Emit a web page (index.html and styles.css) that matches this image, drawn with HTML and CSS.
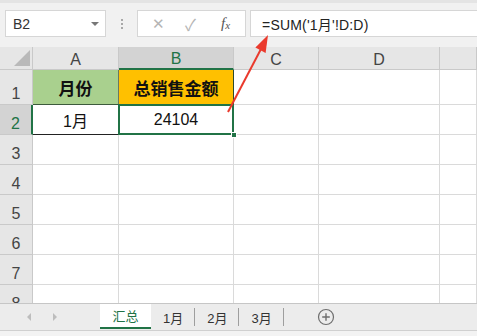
FILE: index.html
```html
<!DOCTYPE html>
<html>
<head>
<meta charset="utf-8">
<link rel="stylesheet" href="styles.css">
</head>
<body>
<div class="app">
  <div class="toolbar">
    <div class="namebox"><span>B2</span><span class="caret"></span></div>
    <div class="grip"><i></i><i></i><i></i></div>
    <div class="fxbox">
      <span class="ico x">✕</span>
      <span class="ico ok">✓</span>
      <span class="ico fx"><i>f</i><sub>x</sub></span>
    </div>
    <div class="formula">=SUM('1月'!D:D)</div>
  </div>

  <div class="sheet">
    <div class="hd corner"><span class="tri"></span></div>
    <div class="hd col">A</div>
    <div class="hd col sel">B</div>
    <div class="hd col">C</div>
    <div class="hd col">D</div>
    <div class="hd col"></div>

    <div class="hd row">1</div>
    <div class="c a1">月份</div>
    <div class="c b1">总销售金额</div>
    <div class="c"></div><div class="c"></div><div class="c"></div>

    <div class="hd row rsel">2</div>
    <div class="c a2">1月</div>
    <div class="c b2">24104<span class="handle"></span></div>
    <div class="c"></div><div class="c"></div><div class="c"></div>

    <div class="hd row">3</div><div class="c"></div><div class="c"></div><div class="c"></div><div class="c"></div><div class="c"></div>
    <div class="hd row">4</div><div class="c"></div><div class="c"></div><div class="c"></div><div class="c"></div><div class="c"></div>
    <div class="hd row">5</div><div class="c"></div><div class="c"></div><div class="c"></div><div class="c"></div><div class="c"></div>
    <div class="hd row">6</div><div class="c"></div><div class="c"></div><div class="c"></div><div class="c"></div><div class="c"></div>
    <div class="hd row">7</div><div class="c"></div><div class="c"></div><div class="c"></div><div class="c"></div><div class="c"></div>
    <div class="hd row">8</div><div class="c"></div><div class="c"></div><div class="c"></div><div class="c"></div><div class="c"></div>
  </div>

  <div class="tabbar">
    <div class="navs"><span class="nav left"></span><span class="nav right"></span></div>
    <div class="tab active">汇总</div>
    <div class="tab">1月</div>
    <div class="tab">2月</div>
    <div class="tab">3月</div>
    <div class="add">
      <svg width="18" height="18" viewBox="0 0 18 18"><circle cx="9" cy="9" r="7.5" fill="none" stroke="#6e6e6e" stroke-width="1.2"/><path d="M9 5.2v7.6M5.2 9h7.6" stroke="#6e6e6e" stroke-width="1.4"/></svg>
    </div>
  </div>
  <div class="status"></div>

  <svg class="arrow" width="477" height="336" viewBox="0 0 477 336">
    <line x1="228" y1="112" x2="261" y2="49" stroke="#ea3a2d" stroke-width="2"/>
    <polygon points="268,35 265.6,53 255.4,47.6" fill="#ea3a2d"/>
  </svg>
</div>
</body>
</html>
```

FILE: styles.css
```css
* { box-sizing: border-box; }
html, body { margin: 0; padding: 0; }
body {
  width: 477px;
  height: 336px;
  overflow: hidden;
  font-family: "Liberation Sans", "Noto Sans CJK SC", sans-serif;
  background: #fff;
}
.app { position: relative; width: 477px; height: 336px; overflow: hidden; }

.toolbar {
  height: 47px;
  background: #f1f1f1;
  border-top: 3px solid #e4e4e4;
  padding-top: 7px;
  display: flex;
  align-items: flex-start;
}
.namebox {
  margin-left: 5px;
  width: 101px;
  height: 27px;
  background: #fff;
  border: 1px solid #d6d6d6;
  display: flex;
  align-items: center;
  justify-content: space-between;
  padding: 0 6px 0 7px;
  font-size: 14px;
  color: #333;
}
.caret {
  width: 0; height: 0;
  border-left: 4px solid transparent;
  border-right: 4px solid transparent;
  border-top: 4px solid #777;
}
.grip {
  width: 31px;
  height: 27px;
  display: flex;
  flex-direction: column;
  align-items: center;
  justify-content: center;
  gap: 2px;
}
.grip i { display: block; width: 2px; height: 2px; background: #a8a8a8; }
.fxbox {
  width: 109px;
  height: 27px;
  background: #fff;
  border: 1px solid #d6d6d6;
  display: flex;
  align-items: center;
  padding-left: 14px;
}
.ico { display: inline-block; color: #b5b5b5; font-size: 15px; }
.ico.x { width: 33px; }
.ico.ok { width: 36px; font-size: 16px; }
.ico.fx { color: #555; font-family: "Liberation Serif", serif; font-size: 15px; }
.ico.fx i { font-style: italic; }
.ico.fx sub { font-style: italic; font-size: 11px; vertical-align: -1px; }
.formula {
  margin-left: 4px;
  flex: 1;
  height: 27px;
  background: #fff;
  border: 1px solid #d6d6d6;
  border-right: none;
  padding-left: 11px;
  font-size: 14px;
  letter-spacing: 0.2px;
  color: #222;
  display: flex;
  align-items: center;
}

.sheet {
  display: grid;
  grid-template-columns: 33px 86px 115px 85px 121px 1fr;
  grid-template-rows: 23px 35px repeat(7, 30px);
  height: 256px;
  overflow: hidden;
}
.hd {
  background: #e6e6e6;
  border-right: 1px solid #c9c9c9;
  border-bottom: 1px solid #c9c9c9;
  color: #444;
  font-size: 16px;
  display: flex;
  justify-content: center;
}
.hd.col { align-items: center; padding-top: 3px; }
.hd.row { align-items: flex-end; padding-bottom: 1px; }
.hd.sel { background: #d3d3d3; color: #217346; border-bottom: 2px solid #217346; }
.hd.rsel { background: #d3d3d3; color: #217346; border-right: 2px solid #217346; }
.corner { position: relative; }
.tri {
  position: absolute;
  right: 2px;
  bottom: 3px;
  width: 0; height: 0;
  border-left: 16px solid transparent;
  border-bottom: 16px solid #b9b9b9;
}
.c {
  border-right: 1px solid #dadada;
  border-bottom: 1px solid #dadada;
  display: flex;
  align-items: center;
  justify-content: center;
  font-size: 16px;
  color: #111;
  position: relative;
}
.a1 { background: #a9d08e; font-weight: bold; font-size: 17px; border-right-color: #6b7a5e; border-bottom-color: #3c5a3c; }
.b1 { background: #ffc000; font-weight: bold; font-size: 17px; border-right-color: #2d4a2d; border-bottom-color: #2d4a2d; }
.a2 { border-bottom: 1px solid #222; border-right-color: #222; }
.b2 { border-bottom-color: #222; border-right-color: #222; }
.b2::after {
  content: "";
  position: absolute;
  left: -1px; top: -1px; right: -1px; bottom: -1px;
  border: 2px solid #217346;
}
.handle {
  position: absolute;
  right: -4px;
  bottom: -4px;
  width: 6px;
  height: 6px;
  background: #217346;
  border: 1px solid #fff;
  z-index: 2;
}

.tabbar {
  height: 27px;
  background: #ececec;
  border-top: 1px solid #c6c6c6;
  display: flex;
  align-items: stretch;
}
.navs { width: 100px; display: flex; align-items: center; padding-left: 27px; gap: 22px; }
.nav { width: 0; height: 0; border-top: 4px solid transparent; border-bottom: 4px solid transparent; }
.nav.left { border-right: 4px solid #bdbdbd; }
.nav.right { border-left: 4px solid #bdbdbd; }
.tab {
  font-size: 13px;
  color: #333;
  display: flex;
  align-items: center;
  padding: 0 12px;
  position: relative;
}
.tab + .tab::after {
  content: "";
  position: absolute;
  right: 0;
  top: 4px;
  bottom: 4px;
  width: 1px;
  background: #9e9e9e;
}
.tab.active {
  width: 51px;
  justify-content: center;
  background: #fff;
  color: #217346;
  border-bottom: 2px solid #217346;
  margin-bottom: 1px;
}
.add { display: flex; align-items: center; margin-left: 33px; }
.status { height: 6px; background: #f3f3f3; border-top: 1px solid #d0d0d0; }

.arrow { position: absolute; left: 0; top: 0; pointer-events: none; }
```
